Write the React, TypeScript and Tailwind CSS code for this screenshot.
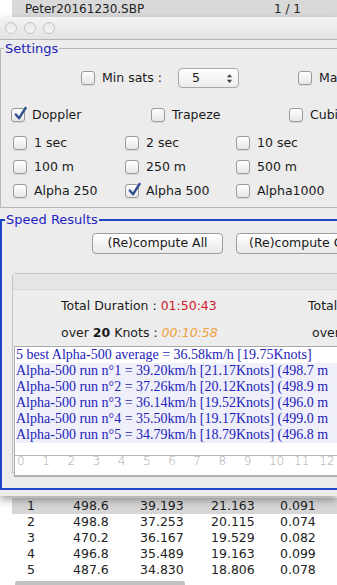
import React from 'react';

const ui = { fontFamily: '"DejaVu Sans", "Liberation Sans", sans-serif' };
const serif = { fontFamily: '"Liberation Serif", "DejaVu Serif", serif' };

function Check({ checked = false }: { checked?: boolean }) {
  return (
    <span className="relative inline-block h-[14px] w-[14px] shrink-0 rounded-[3px] border border-[#9a9a9a] bg-gradient-to-b from-white to-[#e6e6e6] shadow-[0_1px_0_rgba(0,0,0,0.08)]">
      {checked && (
        <svg viewBox="0 0 16 16" className="absolute -top-[3px] left-[1px] h-[16px] w-[15px]">
          <path d="M3 8.5 L6.5 12.5 L13.5 1.5" fill="none" stroke="#2f4f8f" strokeWidth="2.6" strokeLinecap="round" strokeLinejoin="round" />
        </svg>
      )}
    </span>
  );
}

function Opt({ label, checked, w }: { label: string; checked?: boolean; w: string }) {
  return (
    <div className={`flex items-center gap-[7px] ${w}`}>
      <Check checked={checked} />
      <span>{label}</span>
    </div>
  );
}

const runs = [
  'Alpha-500 run n°1 = 39.20km/h [21.17Knots] (498.7 m',
  'Alpha-500 run n°2 = 37.26km/h [20.12Knots] (498.9 m',
  'Alpha-500 run n°3 = 36.14km/h [19.52Knots] (496.0 m',
  'Alpha-500 run n°4 = 35.50km/h [19.17Knots] (499.0 m',
  'Alpha-500 run n°5 = 34.79km/h [18.79Knots] (496.8 m',
];

const table = [
  ['1', '498.6', '39.193', '21.163', '0.091'],
  ['2', '498.8', '37.253', '20.115', '0.074'],
  ['3', '470.2', '36.167', '19.529', '0.082'],
  ['4', '496.8', '35.489', '19.163', '0.099'],
  ['5', '487.6', '34.830', '18.806', '0.078'],
];

export default function App() {
  return (
    <div className="relative h-[585px] w-[337px] overflow-hidden bg-white text-[12.5px] text-[#1a1a1a]" style={ui}>
      {/* file strip of the window behind */}
      <div className="flex h-[17px]">
        <div className="w-[12px] bg-white" />
        <div className="flex flex-1 items-center bg-[#d9d9d9] text-[12px] text-[#222]">
          <span className="ml-[13px]">Peter20161230.SBP</span>
          <span className="ml-auto mr-[36px]">1 / 1</span>
        </div>
      </div>

      {/* front window */}
      <div className="relative z-10 flex h-[479px] flex-col bg-[#ececec] shadow-[0_4px_8px_rgba(0,0,0,0.35)]">
        <div className="flex h-[23px] items-center gap-[7px] border-b border-[#b5b5b5] bg-gradient-to-b from-[#f4f4f4] to-[#e3e3e3] pl-[5px]">
          {[0, 1, 2].map((i) => (
            <span key={i} className="h-[12px] w-[12px] rounded-full border border-[#c4c4c4] bg-gradient-to-b from-[#e8e8e8] to-[#f6f6f6]" />
          ))}
        </div>

        {/* Settings */}
        <fieldset className="mt-[1px] ml-0 h-[167px] border border-r-0 border-[#b8b8b8] pl-0">
          <legend className="ml-[3px] px-[1px] text-[13px] leading-[15px] text-[#2020b8]">Settings</legend>
          <div className="flex items-center pt-[12px]">
            <div className="ml-[80px] flex items-center gap-[7px]">
              <Check />
              <span>Min sats :</span>
            </div>
            <div className="ml-[16px] flex h-[20px] w-[61px] items-center rounded-[4px] border border-[#a8a8a8] bg-gradient-to-b from-white to-[#ececec] pl-[13px] pr-[5px]">
              <span>5</span>
              <svg viewBox="0 0 8 12" className="ml-auto h-[11px] w-[7px]">
                <path d="M4 1 L7 4.5 H1 Z M4 11 L7 7.5 H1 Z" fill="#444" />
              </svg>
            </div>
            <div className="ml-[59px] flex items-center gap-[7px]">
              <Check />
              <span>Max</span>
            </div>
          </div>
          <div className="mt-[19px] flex h-[16px] items-center whitespace-nowrap leading-[16px]">
            <div className="w-[10px]" />
            <Opt label="Doppler" checked w="w-[140px]" />
            <Opt label="Trapeze" w="w-[138px]" />
            <Opt label="Cubic" w="w-[60px]" />
          </div>
          <div className="mt-[8px] flex flex-col whitespace-nowrap leading-[16px]">
            {[
              ['1 sec', '2 sec', '10 sec'],
              ['100 m', '250 m', '500 m'],
              ['Alpha 250', 'Alpha 500', 'Alpha1000'],
            ].map((row, r) => (
              <div key={r} className="flex h-[24px] items-center pl-[12px]">
                <Opt label={row[0]} w="w-[112px]" />
                <Opt label={row[1]} checked={r === 2} w="w-[111px]" />
                <Opt label={row[2]} w="w-[100px]" />
              </div>
            ))}
          </div>
        </fieldset>

        {/* Speed Results */}
        <fieldset className="mt-[4px] h-[278px] border-2 border-r-0 border-[#1f45c6] pl-0">
          <legend className="ml-[3px] px-[1px] text-[13px] leading-[15px] text-[#2424c4]">Speed Results</legend>
          <div className="flex gap-[13px] pl-[90px] pt-[6px]">
            <button className="h-[21px] w-[131px] rounded-[4px] border border-[#9c9c9c] bg-gradient-to-b from-white to-[#e9e9e9] text-[12.5px]">
              (Re)compute All
            </button>
            <button className="h-[21px] w-[140px] whitespace-nowrap rounded-[4px] border border-[#9c9c9c] bg-gradient-to-b from-white to-[#e9e9e9] pl-[12px] text-left text-[12.5px]">
              (Re)compute Chosen
            </button>
          </div>

          <div className="mt-[19px] ml-[10px] h-[200px] rounded-tl-[4px] border border-r-0 border-[#c4c4c4] bg-[#ededed]">
            <div className="h-[16px] border-b border-[#d8d8d8] bg-[#e6e6e6]" />
            <div className="flex whitespace-nowrap pt-[7px] text-[12.5px]">
              <div className="ml-[48px] w-[247px]">
                Total Duration : <span className="text-[#d0182c]">01:50:43</span>
              </div>
              <div>Total</div>
            </div>
            <div className="flex whitespace-nowrap pt-[8px] text-[12.5px]">
              <div className="ml-[48px] w-[251px]">
                over <b>20</b> Knots : <span className="italic text-[#f0a040]">00:10:58</span>
              </div>
              <div>over</div>
            </div>
            <div className="mt-[3px] ml-[1px] h-[131px] overflow-hidden border border-r-0 border-[#a9a9a9] bg-white">
              <div className="whitespace-nowrap pl-[1px] text-[14px] leading-[16px] text-[#2222bb]" style={serif}>
                <div>5 best Alpha-500 average = 36.58km/h [19.75Knots]</div>
                {runs.map((l) => (
                  <div key={l} className="bg-[#f0f0fa]">{l}</div>
                ))}
              </div>
              <div className="mt-[12px] h-[21px] border-t border-b border-[#b8b8b8]">
                <div className="-mt-[1px] flex pl-[2px] text-[12px] leading-[13px] font-extralight text-[#a8a8a8]">
                  {Array.from({ length: 13 }, (_, i) => (
                    <span key={i} className="w-[25.2px] shrink-0">{i}</span>
                  ))}
                </div>
              </div>
            </div>
          </div>
        </fieldset>
      </div>

      {/* table of the window behind */}
      <div className="ml-[12px] mt-[2px] bg-white text-[12.5px] text-[#222]">
        {table.map((r, i) => (
          <div key={i} className={`flex h-[16px] items-center whitespace-nowrap ${i === 0 ? 'bg-[#d6d6d6]' : ''}`}>
            <span className="w-[61px] pl-[15px]">{r[0]}</span>
            <span className="w-[67px]">{r[1]}</span>
            <span className="w-[71px]">{r[2]}</span>
            <span className="w-[69px]">{r[3]}</span>
            <span>{r[4]}</span>
          </div>
        ))}
        <div className="flex h-[11px] items-center pl-[3px]">
          <div className="h-[6px] w-[170px] rounded-full bg-[#c2c2c2]" />
        </div>
      </div>
    </div>
  );
}
